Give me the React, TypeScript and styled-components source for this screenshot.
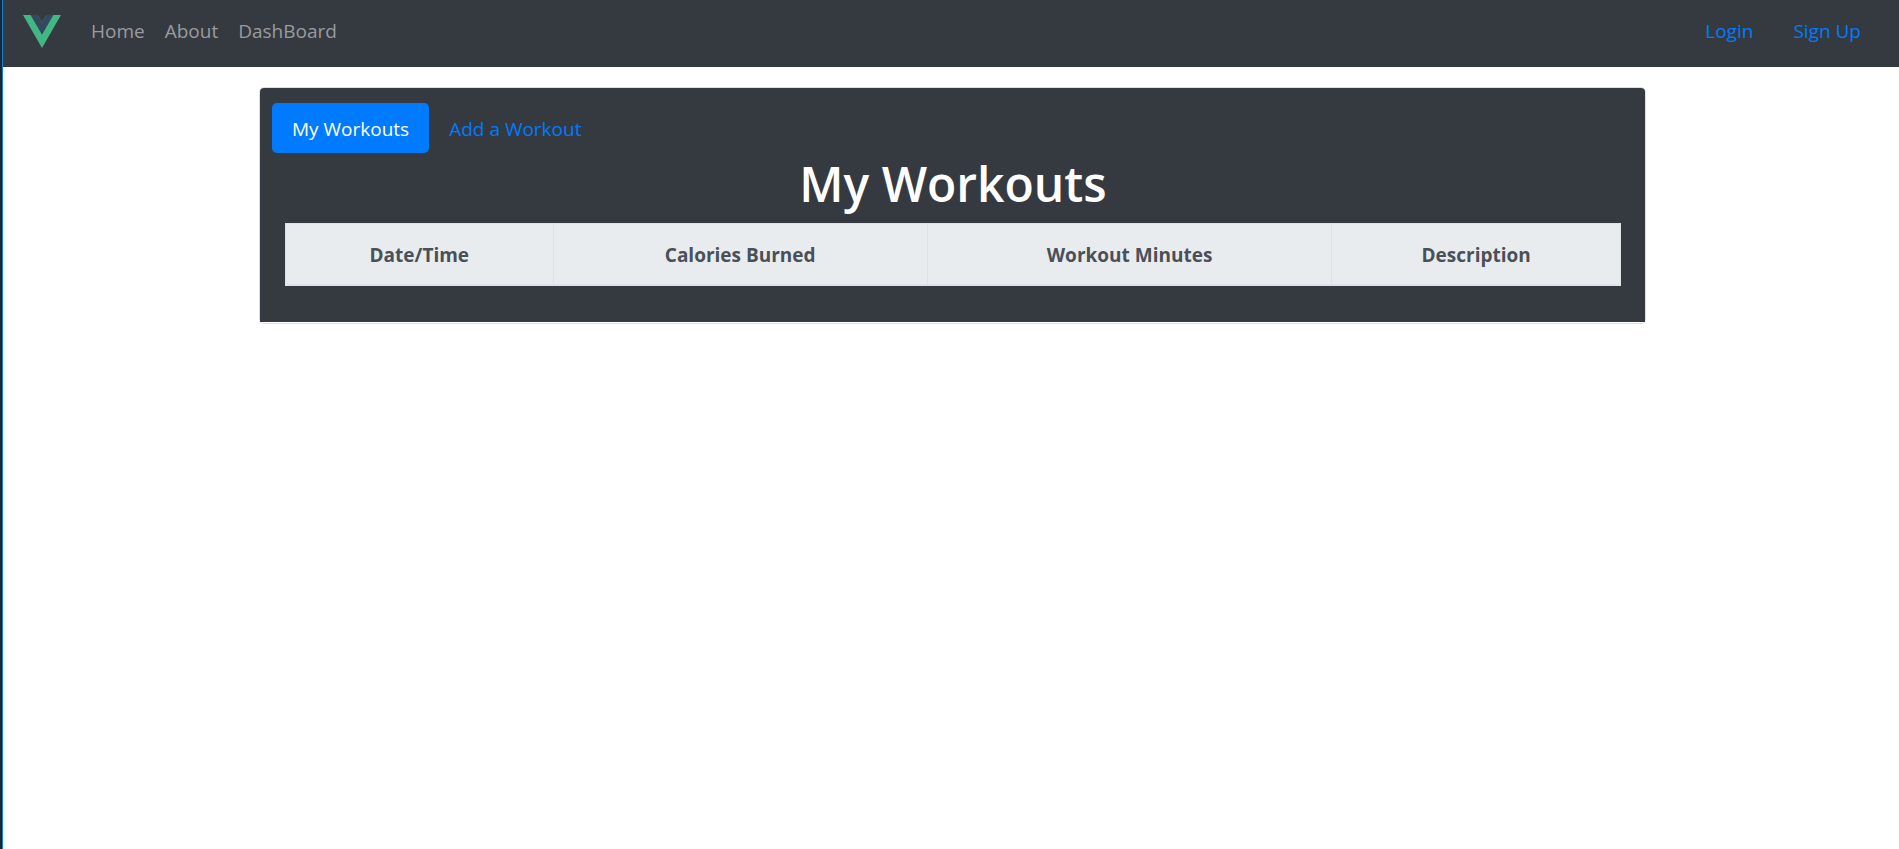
import React from "react";
import styled, { createGlobalStyle } from "styled-components";

const colors = {
  dark: "#343a40",
  primary: "#007bff",
  edge: "#212529",
  accent: "#0a84e0",
  line: "#dee2e6",
  head: "#e9ecef",
  headText: "#495057",
};

const GlobalStyle = createGlobalStyle`
  *, *::before, *::after { box-sizing: border-box; }
  body {
    margin: 0;
    background: #fff;
    font-family: "Segoe UI", "Open Sans", "Noto Sans", sans-serif;
    font-size: 19px;
    line-height: 30px;
  }
`;

const Page = styled.div`
  display: flex;
  min-height: 100vh;
`;

const WindowEdge = styled.div`
  flex: none;
  width: 3px;
  background: ${colors.edge};
  border-right: 1px solid ${colors.accent};
`;

const Content = styled.div`
  flex: 1;
  min-width: 0;
`;

const Navbar = styled.nav`
  display: flex;
  align-items: flex-start;
  height: 67px;
  padding: 10px 28px 10px 20px;
  background: ${colors.dark};
`;

const Brand = styled.a`
  display: flex;
  padding-top: 5px;
  margin-right: 20px;
`;

const NavList = styled.ul<{ $end?: boolean }>`
  display: flex;
  margin: 0;
  margin-left: ${(p) => (p.$end ? "auto" : "0")};
  gap: ${(p) => (p.$end ? "20px" : "0")};
  padding: 6px 0;
  list-style: none;
`;

const NavLink = styled.a<{ $primary?: boolean }>`
  display: block;
  padding: 0 10px;
  color: ${(p) => (p.$primary ? colors.primary : "#999c9f")};
  text-decoration: none;
`;

const Main = styled.main`
  padding: 20px 0 0 3px;
`;

const Card = styled.section`
  max-width: 1387px;
  margin: 0 auto;
  padding-bottom: 1px;
  border: 1px solid #dfdfdf;
  border-radius: 5px;
`;

const CardBody = styled.div`
  padding: 15px 12px 36px;
  border-radius: 4px 4px 0 0;
  background: ${colors.dark};
`;

const Tabs = styled.div`
  display: flex;
`;

const Tab = styled.button<{ $active?: boolean }>`
  padding: 11px 20px 9px;
  border: 0;
  border-radius: 5px;
  background: ${(p) => (p.$active ? colors.primary : "transparent")};
  color: ${(p) => (p.$active ? "#fff" : colors.primary)};
  font: inherit;
  cursor: pointer;
`;

const Panel = styled.div`
  padding: 0 12px 0 13px;
`;

const Title = styled.h1`
  margin: 0;
  padding: 1px 0 9px;
  color: #fff;
  font-size: 48px;
  font-weight: 600;
  line-height: 60px;
  text-align: center;
`;

const Table = styled.table`
  width: 100%;
  border-collapse: separate;
  border-spacing: 0;
  border: 1px solid ${colors.line};
  border-bottom-width: 2px;
`;

const HeadCell = styled.th`
  padding: 16px 15px 14px;
  background: ${colors.head};
  color: ${colors.headText};
  font-weight: 700;
  text-align: center;

  & + & {
    border-left: 1px solid ${colors.line};
  }
`;

const columns = ["Date/Time", "Calories Burned", "Workout Minutes", "Description"];

const Logo = () => (
  <svg width="38" height="33" viewBox="0 0 261.76 226.69" aria-hidden="true">
    <path fill="#41b883" d="M161.096.001l-30.225 52.351L100.647.001H-.005l130.877 226.688L261.749.001z" />
    <path fill="#34495e" d="M161.096.001l-30.225 52.351L100.647.001H52.346l78.526 136.01L209.398.001z" />
  </svg>
);

export default function App() {
  const [active, setActive] = React.useState("My Workouts");

  return (
    <>
      <GlobalStyle />
      <Page>
        <WindowEdge />
        <Content>
          <Navbar>
            <Brand href="#" aria-label="Vue">
              <Logo />
            </Brand>
            <NavList>
              {["Home", "About", "DashBoard"].map((label) => (
                <li key={label}>
                  <NavLink href="#">{label}</NavLink>
                </li>
              ))}
            </NavList>
            <NavList $end>
              {["Login", "Sign Up"].map((label) => (
                <li key={label}>
                  <NavLink href="#" $primary>
                    {label}
                  </NavLink>
                </li>
              ))}
            </NavList>
          </Navbar>
          <Main>
            <Card>
              <CardBody>
                <Tabs role="tablist">
                  {["My Workouts", "Add a Workout"].map((label) => (
                    <Tab
                      key={label}
                      role="tab"
                      aria-selected={active === label}
                      $active={active === label}
                      onClick={() => setActive(label)}
                    >
                      {label}
                    </Tab>
                  ))}
                </Tabs>
                <Panel role="tabpanel">
                  <Title>My Workouts</Title>
                  <Table>
                    <thead>
                      <tr>
                        {columns.map((label) => (
                          <HeadCell key={label} scope="col">
                            {label}
                          </HeadCell>
                        ))}
                      </tr>
                    </thead>
                  </Table>
                </Panel>
              </CardBody>
            </Card>
          </Main>
        </Content>
      </Page>
    </>
  );
}
